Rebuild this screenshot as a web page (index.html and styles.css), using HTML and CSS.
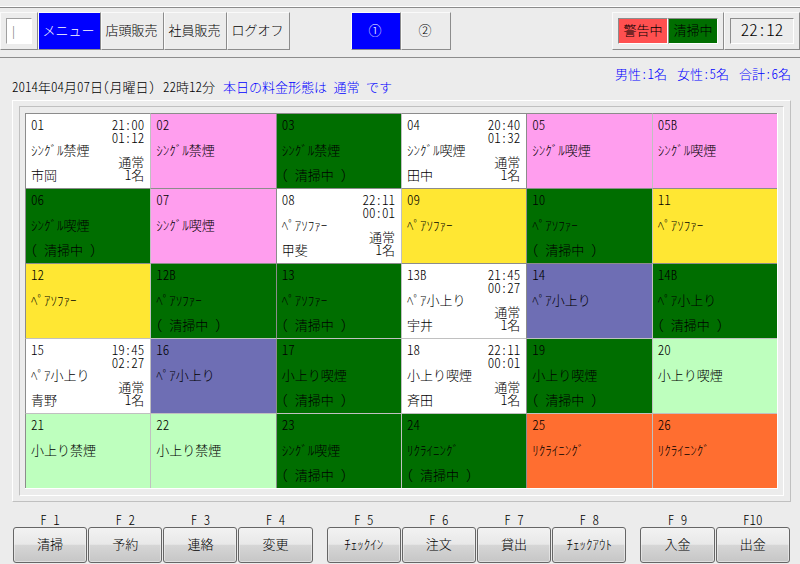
FILE: index.html
```
<!DOCTYPE html>
<html lang="ja">
<head>
<meta charset="utf-8">
<meta name="viewport" content="width=device-width, initial-scale=1">
<title>客室管理</title>
<link rel="stylesheet" href="styles.css">
</head>
<body>
<header class="toolbar">
  <div class="panel"><input class="code" type="text" value="│" aria-label="コード"></div>
  <nav class="menu">
    <button class="tab active">メニュー</button>
    <button class="tab">店頭販売</button>
    <button class="tab">社員販売</button>
    <button class="tab">ログオフ</button>
  </nav>
  <div class="pages">
    <button class="tab page active">①</button>
    <button class="tab page">②</button>
  </div>
  <div class="panel legend"><span class="key warn">警告中</span><span class="key clean">清掃中</span></div>
  <div class="panel"><time class="clock">22:12</time></div>
</header>
<main>
  <p class="counts"><span>男性:1名</span><span>女性:5名</span><span>合計:6名</span></p>
  <p class="status"><span>2014年04月07日(月曜日)</span><span>22時12分</span><span class="rate">本日の料金形態は 通常 です</span></p>
  <section class="frame"><div class="inner"><div class="rooms">
    <div class="room"><b>01</b><i>21:00</i><i class="stay">01:12</i><span class="type">ｼﾝｸﾞﾙ禁煙</span><span class="plan">通常</span><span class="note">市岡</span><span class="num">1名</span></div>
    <div class="room pink"><b>02</b><span class="type">ｼﾝｸﾞﾙ禁煙</span></div>
    <div class="room green"><b>03</b><span class="type">ｼﾝｸﾞﾙ禁煙</span><span class="note">( 清掃中 )</span></div>
    <div class="room"><b>04</b><i>20:40</i><i class="stay">01:32</i><span class="type">ｼﾝｸﾞﾙ喫煙</span><span class="plan">通常</span><span class="note">田中</span><span class="num">1名</span></div>
    <div class="room pink"><b>05</b><span class="type">ｼﾝｸﾞﾙ喫煙</span></div>
    <div class="room pink"><b>05B</b><span class="type">ｼﾝｸﾞﾙ喫煙</span></div>

    <div class="room green"><b>06</b><span class="type">ｼﾝｸﾞﾙ喫煙</span><span class="note">( 清掃中 )</span></div>
    <div class="room pink"><b>07</b><span class="type">ｼﾝｸﾞﾙ喫煙</span></div>
    <div class="room"><b>08</b><i>22:11</i><i class="stay">00:01</i><span class="type">ﾍﾟｱｿﾌｧｰ</span><span class="plan">通常</span><span class="note">甲斐</span><span class="num">1名</span></div>
    <div class="room yellow"><b>09</b><span class="type">ﾍﾟｱｿﾌｧｰ</span></div>
    <div class="room green"><b>10</b><span class="type">ﾍﾟｱｿﾌｧｰ</span><span class="note">( 清掃中 )</span></div>
    <div class="room yellow"><b>11</b><span class="type">ﾍﾟｱｿﾌｧｰ</span></div>

    <div class="room yellow"><b>12</b><span class="type">ﾍﾟｱｿﾌｧｰ</span></div>
    <div class="room green"><b>12B</b><span class="type">ﾍﾟｱｿﾌｧｰ</span><span class="note">( 清掃中 )</span></div>
    <div class="room green"><b>13</b><span class="type">ﾍﾟｱｿﾌｧｰ</span><span class="note">( 清掃中 )</span></div>
    <div class="room"><b>13B</b><i>21:45</i><i class="stay">00:27</i><span class="type">ﾍﾟｱ小上り</span><span class="plan">通常</span><span class="note">宇井</span><span class="num">1名</span></div>
    <div class="room purple"><b>14</b><span class="type">ﾍﾟｱ小上り</span></div>
    <div class="room green"><b>14B</b><span class="type">ﾍﾟｱ小上り</span><span class="note">( 清掃中 )</span></div>

    <div class="room"><b>15</b><i>19:45</i><i class="stay">02:27</i><span class="type">ﾍﾟｱ小上り</span><span class="plan">通常</span><span class="note">青野</span><span class="num">1名</span></div>
    <div class="room purple"><b>16</b><span class="type">ﾍﾟｱ小上り</span></div>
    <div class="room green"><b>17</b><span class="type">小上り喫煙</span><span class="note">( 清掃中 )</span></div>
    <div class="room"><b>18</b><i>22:11</i><i class="stay">00:01</i><span class="type">小上り喫煙</span><span class="plan">通常</span><span class="note">斉田</span><span class="num">1名</span></div>
    <div class="room green"><b>19</b><span class="type">小上り喫煙</span><span class="note">( 清掃中 )</span></div>
    <div class="room mint"><b>20</b><span class="type">小上り喫煙</span></div>

    <div class="room mint"><b>21</b><span class="type">小上り禁煙</span></div>
    <div class="room mint"><b>22</b><span class="type">小上り禁煙</span></div>
    <div class="room green"><b>23</b><span class="type">ｼﾝｸﾞﾙ喫煙</span><span class="note">( 清掃中 )</span></div>
    <div class="room green"><b>24</b><span class="type">ﾘｸﾗｲﾆﾝｸﾞ</span><span class="note">( 清掃中 )</span></div>
    <div class="room orange"><b>25</b><span class="type">ﾘｸﾗｲﾆﾝｸﾞ</span></div>
    <div class="room orange"><b>26</b><span class="type">ﾘｸﾗｲﾆﾝｸﾞ</span></div>
  </div></div></section>
</main>
<footer class="keys">
  <div class="group">
    <label class="fkey">F 1<button>清掃</button></label>
    <label class="fkey">F 2<button>予約</button></label>
    <label class="fkey">F 3<button>連絡</button></label>
    <label class="fkey">F 4<button>変更</button></label>
  </div>
  <div class="group">
    <label class="fkey">F 5<button>ﾁｪｯｸｲﾝ</button></label>
    <label class="fkey">F 6<button>注文</button></label>
    <label class="fkey">F 7<button>貸出</button></label>
    <label class="fkey">F 8<button>ﾁｪｯｸｱｳﾄ</button></label>
  </div>
  <div class="group short">
    <label class="fkey">F 9<button>入金</button></label>
    <label class="fkey">F10<button>出金</button></label>
  </div>
</footer>
</body>
</html>
```
FILE: styles.css
```
* { box-sizing: border-box; }

body {
  margin: 0;
  padding-top: 6px;
  background: #ececec;
  color: #000;
  font: 300 13px/13px "Noto Sans CJK JP", sans-serif;
  font-feature-settings: "hwid";
}

button, input { font: inherit; font-feature-settings: inherit; color: inherit; }
p { margin: 0; white-space: pre; }
b, i { font-weight: inherit; font-style: normal; }

/* toolbar */
.toolbar {
  display: flex;
  height: 52px;
  padding: 5px 0 7px;
  border-top: 1px solid #fff;
  border-bottom: 1px solid #8c8c8c;
  box-shadow: inset 0 1px #8c8c8c;
}
.panel, .tab {
  display: flex;
  align-items: center;
  justify-content: center;
  height: 38px;
  border: 1px solid;
  border-color: #fafafa #8c8c8c #8c8c8c #fafafa;
}
.panel { padding: 0 5px; }
.code {
  width: 26px;
  height: 26px;
  padding: 0;
  border: 1px solid;
  border-color: #a0a0a0 #fff #fff #a0a0a0;
  border-radius: 0;
  background: #fff;
  color: #555;
}
.menu, .pages { display: flex; }
.tab {
  width: 63px;
  padding: 0 2px 3px 0;
  border-radius: 0;
  background: #ececec;
  white-space: nowrap;
}
.active { background: #00f; color: #fff; }
.pages { margin-left: 61px; }
.page { width: 50px; }
.legend { margin-left: auto; }
.key {
  width: 50px;
  height: 26px;
  border: 1px solid;
  border-color: #8c8c8c #fff #fff #8c8c8c;
  line-height: 22px;
  text-align: center;
}
.warn { background: #ff5050; }
.clean { background: #006e00; }
.clock {
  width: 64px;
  height: 26px;
  border: 1px solid;
  border-color: #8c8c8c #fff #fff #8c8c8c;
  font-size: 17px;
  line-height: 20px;
  text-align: center;
}

/* headings */
main { padding: 0 9px 0 12px; }
.counts {
  display: flex;
  justify-content: flex-end;
  gap: 10px;
  padding-top: 10px;
  line-height: 12px;
  color: #00f;
}
.status { display: flex; gap: 8px; }
.rate { color: #00f; }

/* room board */
.frame {
  margin-top: 7px;
  padding: 5px 6px;
  border: 1px solid;
  border-color: #fff #c0c0c0 #c0c0c0 #fff;
}
.inner {
  padding: 6px 5px;
  border: 1px solid;
  border-color: #c0c0c0 #fff #fff #c0c0c0;
}
.rooms {
  display: grid;
  grid-template-columns: repeat(6, 1fr);
  border-right: 1px solid #fff;
  border-bottom: 1px solid #fff;
}
.room {
  display: grid;
  grid-template: repeat(5, 1fr) / 1fr auto;
  align-items: center;
  height: 75px;
  padding: 5px 6px 7px 5px;
  border-top: 1px solid #8c8c8c;
  border-left: 1px solid #8c8c8c;
  background: #fff;
  line-height: 12px;
  white-space: nowrap;
}
.room:nth-child(2n) { border-left-color: #c0c0c0; }
.room:nth-child(n+19) { border-top-color: #c0c0c0; }
.room b { grid-area: 1 / 1; }
.room i { grid-area: 1 / 2; }
.room .stay { grid-area: 2 / 2; }
.type { grid-area: 3 / 1; }
.plan { grid-area: 4 / 2; text-align: right; }
.note { grid-area: 5 / 1; }
.num { grid-area: 5 / 2; text-align: right; }
.room.pink { background: #ff9eee; }
.room.green { background: #006e00; }
.room.yellow { background: #ffe733; }
.room.purple { background: #6e6eb4; }
.room.mint { background: #beffbe; }
.room.orange { background: #ff6e30; }

/* function keys */
.keys {
  display: flex;
  gap: 14px;
  padding: 11px 10px 0 13px;
}
.group { display: flex; flex: 4; gap: 1px; }
.short { flex: 2; }
.fkey {
  display: flex;
  flex: 1;
  flex-direction: column;
  text-align: center;
  white-space: pre;
}
.fkey button {
  height: 36px;
  margin-top: 1px;
  padding: 0 0 3px;
  border: 1px solid #666;
  border-radius: 3px;
  background: linear-gradient(#f2f2f2, #e8e8e8 48%, #d6d6d6 50%, #c6c6c6);
  box-shadow: inset 0 0 0 1px #f4f4f488;
}
```
